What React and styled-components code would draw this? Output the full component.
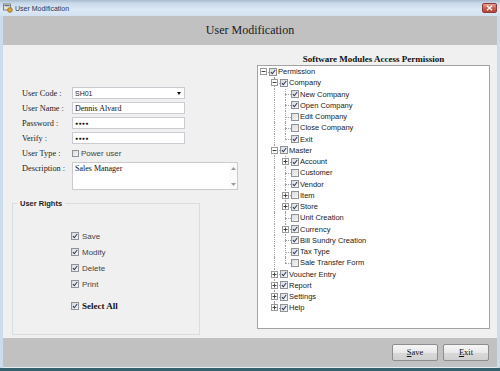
import React from 'react'
import styled, {createGlobalStyle} from 'styled-components'

const GlobalStyle = createGlobalStyle`
  html, body {
    margin: 0;
    padding: 0;
    overflow: hidden;
    background: #ffffff;
  }
`

const tree = [
  {
    label: 'Permission', checked: true, children: [
      {
        label: 'Company', checked: true, children: [
          {label: 'New Company', checked: true},
          {label: 'Open Company', checked: true},
          {label: 'Edit Company', checked: false},
          {label: 'Close Company', checked: false},
          {label: 'Exit', checked: true},
        ]
      },
      {
        label: 'Master', checked: true, children: [
          {label: 'Account', checked: true, collapsed: true},
          {label: 'Customer', checked: false},
          {label: 'Vendor', checked: true},
          {label: 'Item', checked: false, collapsed: true},
          {label: 'Store', checked: true, collapsed: true},
          {label: 'Unit Creation', checked: false},
          {label: 'Currency', checked: true, collapsed: true},
          {label: 'Bill Sundry Creation', checked: true},
          {label: 'Tax Type', checked: true},
          {label: 'Sale Transfer Form', checked: false},
        ]
      },
      {label: 'Voucher Entry', checked: true, collapsed: true},
      {label: 'Report', checked: true, collapsed: true},
      {label: 'Settings', checked: true, collapsed: true},
      {label: 'Help', checked: true, collapsed: true},
    ]
  }
]

// turn the nested tree into rows, keeping which ancestor columns still need a line
const flatten = (nodes, level = 0, guides = []) => {
  let rows = []
  nodes.forEach((node, i) => {
    const isLast = i === nodes.length - 1
    rows.push({
      label: node.label,
      checked: node.checked,
      level,
      guides,
      isLast,
      first: level === 0 && i === 0,
      kids: !!node.children || !!node.collapsed,
      open: !!node.children,
    })
    if (node.children) {
      rows = rows.concat(flatten(node.children, level + 1, guides.concat(!isLast)))
    }
  })
  return rows
}

const rights = [
  {label: 'Save'},
  {label: 'Modify'},
  {label: 'Delete'},
  {label: 'Print'},
  {label: 'Select All', bold: true},
]

const CheckBox = ({checked, size = 8}) => (
  <Box $size={size}>
    {checked && (
      <svg width={size - 2} height={size - 2} viewBox="0 0 8 8">
        <path d="M1.2 4.3 L3.1 6.3 L6.9 1.3" fill="none" stroke="#2b3960" strokeWidth="1.4" />
      </svg>
    )}
  </Box>
)

const App = () => {
  const rows = flatten(tree)

  return (
    <>
      <GlobalStyle />
      <Window>
        <TitleBar>
          <AppIcon width="10" height="10" viewBox="0 0 10 10">
            <rect x="0.5" y="1" width="7" height="6" fill="#e9e4d2" stroke="#6d6a5f" strokeWidth="0.8" />
            <rect x="1.5" y="2" width="5" height="1.2" fill="#4a6fa5" />
            <circle cx="7" cy="7" r="2.4" fill="#d9a23a" stroke="#7a5a1c" strokeWidth="0.6" />
          </AppIcon>
          <TitleText>User Modification</TitleText>
          <CloseButton>
            <svg width="7" height="6" viewBox="0 0 7 6">
              <path d="M1 0.8 L6 5.2 M6 0.8 L1 5.2" stroke="#ffffff" strokeWidth="1.3" />
            </svg>
          </CloseButton>
        </TitleBar>

        <Header>
          <HeaderTitle>User Modification</HeaderTitle>
        </Header>

        <Body>
          <LeftPane>
            <Form>
              <FieldLabel>User Code :</FieldLabel>
              <SelectBox>
                <span>SH01</span>
                <DropArrow />
              </SelectBox>

              <FieldLabel>User Name :</FieldLabel>
              <TextBox $serif>Dennis Alvard</TextBox>

              <FieldLabel>Password :</FieldLabel>
              <TextBox $dots>●●●●</TextBox>

              <FieldLabel>Verify :</FieldLabel>
              <TextBox $dots>●●●●</TextBox>

              <FieldLabel>User Type :</FieldLabel>
              <PowerRow>
                <CheckBox checked={false} size={7} />
                <span>Power user</span>
              </PowerRow>

              <FieldLabel $top>Description :</FieldLabel>
              <MemoBox>
                <MemoText>Sales Manager</MemoText>
                <ScrollCol>
                  <svg width="5" height="3" viewBox="0 0 5 3"><path d="M0 3 L2.5 0 L5 3 Z" fill="#9a9a9a" /></svg>
                  <svg width="5" height="3" viewBox="0 0 5 3"><path d="M0 0 L2.5 3 L5 0 Z" fill="#9a9a9a" /></svg>
                </ScrollCol>
              </MemoBox>
            </Form>

            <RightsBox>
              <RightsLegend>User Rights</RightsLegend>
              <RightsList>
                {rights.map((r) => (
                  <RightsItem key={r.label} $bold={r.bold}>
                    <CheckBox checked size={8} />
                    <span>{r.label}</span>
                  </RightsItem>
                ))}
              </RightsList>
            </RightsBox>
          </LeftPane>

          <RightPane>
            <PermHeading>Software Modules Access Permission</PermHeading>
            <TreeBox>
              {rows.map((row) => (
                <TreeRow key={row.label}>
                  {row.guides.map((g, i) => (
                    <Guide key={i} $top={g} $bottom={g} />
                  ))}
                  <Guide $top={!row.first} $bottom={!row.isLast} $stub>
                    {row.kids && (
                      <Expander>
                        <svg width="5" height="5" viewBox="0 0 5 5">
                          <path d={row.open ? 'M0.5 2.5 H4.5' : 'M0.5 2.5 H4.5 M2.5 0.5 V4.5'} stroke="#444" strokeWidth="1" />
                        </svg>
                      </Expander>
                    )}
                  </Guide>
                  <CheckBox checked={row.checked} size={8} />
                  <TreeLabel>{row.label}</TreeLabel>
                </TreeRow>
              ))}
            </TreeBox>
          </RightPane>
        </Body>

        <Footer>
          <ActionButton><u>S</u>ave</ActionButton>
          <ActionButton><u>E</u>xit</ActionButton>
        </Footer>
      </Window>
    </>
  )
}

export default App

const Window = styled.div`
  width: 500px;
  height: 371px;
  display: flex;
  flex-direction: column;
  box-sizing: border-box;
  padding: 0 3px;
  background: #cddced;
  border-bottom: 3px solid #35606e;
  font-family: "Liberation Sans", Arial, sans-serif;
`

const TitleBar = styled.div`
  height: 16px;
  margin: 0 -3px;
  display: flex;
  align-items: center;
  padding: 0 3px 0 3px;
  background: linear-gradient(to bottom, #a9bccf 0%, #c9daeb 22%, #dce8f5 60%, #d2e1f1 100%);
`

const AppIcon = styled.svg`
  flex-shrink: 0;
  margin-right: 2px;
`

const TitleText = styled.span`
  font-size: 7px;
  color: #1d3557;
  flex: 1;
`

const CloseButton = styled.span`
  width: 15px;
  height: 10px;
  display: flex;
  align-items: center;
  justify-content: center;
  border-radius: 2px;
  background: linear-gradient(to bottom, #e8a39a, #c75a4d 55%, #b8433a);
  border: 1px solid #8a3a32;
  box-sizing: border-box;
`

const Header = styled.div`
  height: 29px;
  background: #c1c1c1;
  display: flex;
  align-items: center;
  justify-content: center;
`

const HeaderTitle = styled.h1`
  margin: 0;
  font-family: "Liberation Serif", "Times New Roman", serif;
  font-weight: normal;
  font-size: 12px;
  color: #1a1a1a;
`

const Body = styled.div`
  flex: 1;
  display: flex;
  background: #f0f0f0;
`

const LeftPane = styled.div`
  width: 250px;
  box-sizing: border-box;
  padding: 42px 0 0 9px;
  display: flex;
  flex-direction: column;
`

const Form = styled.div`
  display: grid;
  grid-template-columns: 50px auto;
  grid-auto-rows: 12px;
  row-gap: 3px;
  padding-left: 10px;
  align-items: center;
  justify-items: start;
`

const FieldLabel = styled.span`
  font-family: "Liberation Serif", "Times New Roman", serif;
  font-size: 8.3px;
  color: #222;
  align-self: ${p => (p.$top ? 'start' : 'center')};
  margin-top: ${p => (p.$top ? '2px' : '0')};
`

const Field = styled.div`
  width: 113px;
  height: 12px;
  box-sizing: border-box;
  background: #ffffff;
  border: 1px solid #c9cbd0;
  display: flex;
  align-items: center;
  padding-left: 2px;
`

const TextBox = styled(Field)`
  font-family: ${p => (p.$serif ? '"Liberation Serif", "Times New Roman", serif' : '"Liberation Sans", Arial, sans-serif')};
  font-size: ${p => (p.$dots ? '5px' : '8px')};
  letter-spacing: ${p => (p.$dots ? '0.4px' : '0')};
  color: #111;
`

const SelectBox = styled(Field)`
  justify-content: space-between;
  padding-right: 3px;
  font-size: 7px;
  color: #222;
`

const DropArrow = styled.span`
  width: 0;
  height: 0;
  border-left: 2.5px solid transparent;
  border-right: 2.5px solid transparent;
  border-top: 3px solid #111;
`

const PowerRow = styled.div`
  display: flex;
  align-items: center;
  gap: 2px;
  font-size: 8px;
  color: #444;
`

const MemoBox = styled.div`
  grid-row: span 2;
  align-self: start;
  width: 166px;
  height: 28px;
  box-sizing: border-box;
  background: #ffffff;
  border: 1px solid #c9cbd0;
  display: flex;
`

const MemoText = styled.div`
  flex: 1;
  padding: 1px 2px;
  font-family: "Liberation Serif", "Times New Roman", serif;
  font-size: 8px;
  color: #111;
`

const ScrollCol = styled.div`
  width: 8px;
  display: flex;
  flex-direction: column;
  justify-content: space-between;
  align-items: center;
  padding: 4px 0 3px;
  background: #fafafa;
`

const RightsBox = styled.fieldset`
  margin: 10px 0 0 0;
  padding: 0;
  width: 188px;
  height: 136px;
  box-sizing: border-box;
  border: 1px solid #d8dde2;
  min-inline-size: 0;
`

const RightsLegend = styled.legend`
  margin-left: 4px;
  padding: 0 3px;
  font-size: 7.5px;
  font-weight: bold;
  color: #222;
`

const RightsList = styled.div`
  display: flex;
  flex-direction: column;
  padding: 20px 0 0 58px;
`

const RightsItem = styled.label`
  height: 16px;
  display: flex;
  align-items: center;
  gap: 3px;
  margin-top: ${p => (p.$bold ? '6px' : '0')};
  font-family: ${p => (p.$bold ? '"Liberation Serif", "Times New Roman", serif' : '"Liberation Sans", Arial, sans-serif')};
  font-size: ${p => (p.$bold ? '9px' : '8px')};
  font-weight: ${p => (p.$bold ? 'bold' : 'normal')};
  color: ${p => (p.$bold ? '#111' : '#444')};
`

const Box = styled.span`
  width: ${p => p.$size}px;
  height: ${p => p.$size}px;
  box-sizing: border-box;
  flex-shrink: 0;
  display: inline-flex;
  align-items: center;
  justify-content: center;
  border: 1px solid #8f9397;
  background: linear-gradient(135deg, #d9dbde, #f6f6f6);
`

const RightPane = styled.div`
  flex: 1;
  padding: 8px 0 0 4px;
  display: flex;
  flex-direction: column;
`

const PermHeading = styled.h2`
  margin: 0;
  width: 233px;
  height: 12px;
  line-height: 12px;
  text-align: center;
  font-family: "Liberation Serif", "Times New Roman", serif;
  font-size: 9px;
  font-weight: bold;
  color: #111;
`

const TreeBox = styled.div`
  width: 233px;
  height: 264px;
  box-sizing: border-box;
  background: #ffffff;
  border: 1px solid #a3a3a3;
  padding-top: 0;
`

const TreeRow = styled.div`
  height: 11.25px;
  display: flex;
  align-items: center;
`

const Guide = styled.span`
  position: relative;
  width: 11px;
  height: 100%;
  flex-shrink: 0;

  &::before {
    content: '';
    display: ${p => (p.$top || p.$bottom ? 'block' : 'none')};
    position: absolute;
    left: 5px;
    top: ${p => (p.$top ? '0' : '50%')};
    bottom: ${p => (p.$bottom ? '0' : '50%')};
    border-left: 1px dotted #a0a0a0;
  }

  &::after {
    content: '';
    display: ${p => (p.$stub ? 'block' : 'none')};
    position: absolute;
    left: 5px;
    right: 0;
    top: 50%;
    border-top: 1px dotted #a0a0a0;
  }
`

const Expander = styled.span`
  position: absolute;
  z-index: 1;
  left: 2px;
  top: 50%;
  margin-top: -3.5px;
  width: 7px;
  height: 7px;
  box-sizing: border-box;
  border: 1px solid #9a9a9a;
  background: #ffffff;
  display: flex;
  align-items: center;
  justify-content: center;
`

const TreeLabel = styled.span`
  margin-left: 1px;
  font-size: 7.5px;
  line-height: 11px;
  color: #222;
  white-space: nowrap;
`

const Footer = styled.div`
  height: 30px;
  box-sizing: border-box;
  background: #c1c1c1;
  border-bottom: 1px solid #e6edf2;
  display: flex;
  align-items: center;
  justify-content: flex-end;
  gap: 5px;
  padding: 0 8px 1px 0;
`

const ActionButton = styled.button`
  width: 46px;
  height: 17px;
  padding: 0;
  border: 1px solid #8d8d8d;
  border-radius: 2px;
  background: linear-gradient(to bottom, #f6f6f6 0%, #e9e9e9 50%, #d9d9d9 51%, #d0d0d0 100%);
  font-family: "Liberation Serif", "Times New Roman", serif;
  font-size: 8.5px;
  color: #111;
  cursor: pointer;
`
